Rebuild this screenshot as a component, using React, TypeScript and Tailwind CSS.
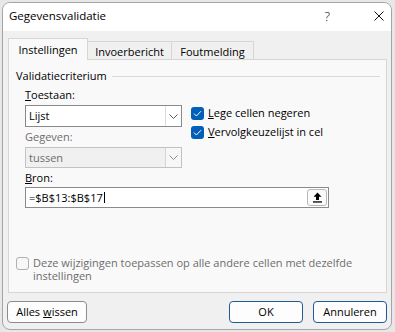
import React from "react";

const Chevron: React.FC<{ color?: string }> = ({ color = "#5c5c5c" }) => (
  <svg width="9" height="5" viewBox="0 0 9 5" fill="none">
    <path d="M0.5 0.5 L4.5 4.5 L8.5 0.5" stroke={color} strokeWidth="1" />
  </svg>
);

const CheckedBox: React.FC = () => (
  <span className="flex h-[13px] w-[13px] items-center justify-center rounded-[3px] bg-[#005fb8]">
    <svg width="9" height="7" viewBox="0 0 9 7" fill="none">
      <path d="M1 3.6 L3.4 6 L8 1.2" stroke="#ffffff" strokeWidth="1" />
    </svg>
  </span>
);

const ComboBox: React.FC<{ value: string; disabled?: boolean; height: string }> = ({
  value,
  disabled,
  height,
}) => (
  <div
    className={
      disabled
        ? `flex ${height} w-[157px] border border-[#c2c2c2] bg-[#f0f0f0]`
        : `flex ${height} w-[157px] border border-[#8a8a8a] bg-white`
    }
  >
    <span
      className={
        disabled
          ? "flex flex-1 items-center pl-[3px] text-[#6d6d6d]"
          : "flex flex-1 items-center pl-[3px]"
      }
    >
      {value}
    </span>
    <span
      className={
        disabled
          ? "flex w-[16px] items-center justify-center border-l border-[#d4d4d4] bg-[#f7f7f7]"
          : "flex w-[16px] items-center justify-center border-l border-[#dcdcdc] bg-white"
      }
    >
      <Chevron color={disabled ? "#8a8a8a" : "#5c5c5c"} />
    </span>
  </div>
);

export default function App() {
  return (
    <div className="h-[332px] w-[395px] overflow-hidden bg-[#e7e7e7] pl-[2px] pt-[2px] font-['Open_Sans',sans-serif] text-[11px] leading-[16px] text-black">
      <div className="flex h-[328px] w-[390px] flex-col overflow-hidden rounded-[8px] border border-[#a5a5a5] bg-[#f0f0f0]">
        {/* title bar */}
        <div className="flex h-[28px] shrink-0 items-center bg-white pb-[2px] pl-[6px]">
          <span className="text-[11.5px]">Gegevensvalidatie</span>
          <span className="ml-auto text-[13px] font-light">?</span>
          <svg className="ml-[44px] mr-[7px]" width="10" height="10" viewBox="0 0 10 10">
            <path d="M0.5 0.5 L9.5 9.5 M9.5 0.5 L0.5 9.5" stroke="#111" strokeWidth="1" />
          </svg>
        </div>

        {/* tabs */}
        <div className="ml-[5px] mt-[7px] flex items-end">
          <div className="relative z-10 -mb-px flex h-[22px] w-[80px] items-center justify-center border border-b-0 border-[#d6d6d6] bg-[#f9f9f9] pt-[1px]">
            Instellingen
          </div>
          <div className="flex h-[18px] w-[84px] items-center justify-center border border-l-0 border-b-0 border-[#d6d6d6] bg-[#f0f0f0] pt-[2px]">
            Invoerbericht
          </div>
          <div className="flex h-[18px] w-[82px] items-center justify-center border border-l-0 border-b-0 border-[#d6d6d6] bg-[#f0f0f0] pt-[2px]">
            Foutmelding
          </div>
        </div>

        {/* tab panel */}
        <div className="ml-[5px] flex h-[234px] w-[379px] shrink-0 flex-col border border-[#d6d6d6] bg-[#f9f9f9]">
          <div className="mt-[8px] flex items-center pl-[7px]">
            <span>Validatiecriterium</span>
            <span className="ml-[5px] mr-[6px] h-px flex-1 bg-[#dadada]" />
          </div>

          <div className="flex pl-[16px]">
            <div className="flex w-[157px] flex-col">
              <span className="mt-[3px] h-[16px]">
                <u>T</u>oestaan:
              </span>
              <div className="mt-[2px]">
                <ComboBox value="Lijst" height="h-[22px]" />
              </div>
              <span className="mt-[2px] h-[16px] text-[#6d6d6d]">Gegeven:</span>
              <div className="mt-[2px]">
                <ComboBox value="tussen" height="h-[21px]" disabled />
              </div>
            </div>
            <div className="ml-[9px] flex flex-col gap-[3px] pt-[21px]">
              <div className="flex h-[16px] items-center gap-[4px]">
                <CheckedBox />
                <span>
                  <u>L</u>ege cellen negeren
                </span>
              </div>
              <div className="flex h-[16px] items-center gap-[4px]">
                <CheckedBox />
                <span>
                  <u>V</u>ervolgkeuzelijst in cel
                </span>
              </div>
            </div>
          </div>

          <span className="mt-[2px] h-[16px] pl-[16px]">
            <u>B</u>ron:
          </span>
          <div className="ml-[16px] mt-[1px] flex h-[21px] w-[304px] items-center border border-[#8a8a8a] bg-white pl-[3px]">
            <span>=$B$13:$B$17</span>
            <span className="ml-px h-[11px] w-px bg-black" />
            <span className="ml-auto mr-px flex h-[17px] w-[20px] items-center justify-center rounded-[3px] border border-[#b8b8b8] bg-[#fbfbfb]">
              <svg width="9" height="11" viewBox="0 0 9 11">
                <path d="M4.5 0.5 L8.5 4.8 H6 V8 H3 V4.8 H0.5 Z" fill="#000" />
                <rect x="0" y="9.3" width="9" height="1.3" fill="#000" />
              </svg>
            </span>
          </div>

          <div className="ml-[7px] mt-[48px] flex items-start gap-[4px]">
            <span className="mt-px h-[13px] w-[13px] shrink-0 rounded-[3px] border border-[#b0b0b0] bg-[#f7f7f7]" />
            <span className="whitespace-nowrap leading-[13px] text-[#6d6d6d]">
              Deze wijzigingen toepassen op alle andere cellen met dezelfde
              <br />
              instellingen
            </span>
          </div>
        </div>

        {/* buttons */}
        <div className="mt-[8px] flex">
          <button className="ml-[4px] flex h-[22px] w-[80px] items-center justify-center rounded-[4px] border border-[#8c8c8c] bg-[#fdfdfd]">
            Alles <u className="ml-[3px]">w</u>issen
          </button>
          <button className="ml-auto flex h-[22px] w-[74px] items-center justify-center rounded-[4px] border border-[#1f5a96] bg-[#fdfdfd]">
            OK
          </button>
          <button className="ml-[10px] mr-[4px] flex h-[22px] w-[74px] items-center justify-center rounded-[4px] border border-[#1f5a96] bg-[#fdfdfd]">
            Annuleren
          </button>
        </div>
      </div>
    </div>
  );
}
